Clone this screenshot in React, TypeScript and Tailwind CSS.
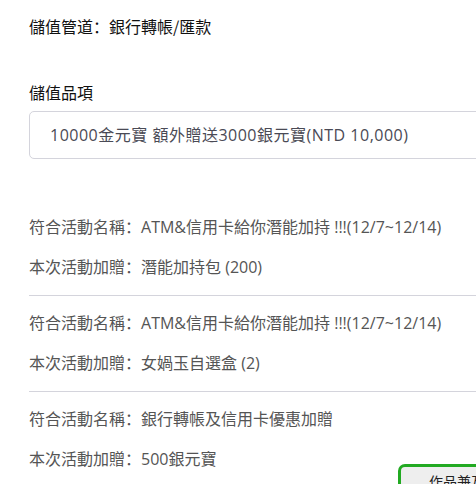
const events = [
  { name: 'ATM&信用卡給你潛能加持 !!!(12/7~12/14)', gift: '潛能加持包 (200)' },
  { name: 'ATM&信用卡給你潛能加持 !!!(12/7~12/14)', gift: '女媧玉自選盒 (2)' },
  { name: '銀行轉帳及信用卡優惠加贈', gift: '500銀元寶' },
]

export default function App() {
  return (
    <div className="relative w-[476px] h-[484px] overflow-hidden bg-white pl-[29px] pt-[14px] font-['Open_Sans','Noto_Sans_CJK_SC',sans-serif]">
      {/* 儲值管道 */}
      <div className="h-[24px] leading-[24px] text-[16px] text-[#111] font-['Noto_Sans_CJK_SC',sans-serif]">
        儲值管道：銀行轉帳/匯款
      </div>

      <div className="mt-[42px] h-[24px] leading-[24px] text-[16px] text-[#111] font-['Noto_Sans_CJK_SC',sans-serif]">
        儲值品項
      </div>

      <div className="mt-[7px] h-[48px] w-[480px] rounded-[5px] border border-[#d4d4dc] flex items-center pl-[20px] text-[16px] tracking-[0.5px] text-[#4a4a55] whitespace-nowrap">
        10000金元寶 額外贈送3000銀元寶(NTD 10,000)
      </div>

      <div className="mt-[56px]">
        {events.map((e, i) => (
          <div key={i}>
            <div className="h-[24px] leading-[24px] text-[16px] text-[#555] whitespace-nowrap">
              符合活動名稱：{e.name}
            </div>
            <div className="mt-[16px] h-[24px] leading-[24px] text-[16px] text-[#555] whitespace-nowrap">
              本次活動加贈：{e.gift}
            </div>
            {i < events.length - 1 && (
              <div className="mt-[16px] mb-[15px] h-px w-[460px] bg-[#d4d4dc]" />
            )}
          </div>
        ))}
      </div>

      {/* 浮動按鈕 (被裁切) */}
      <div className="absolute left-[398px] top-[464px] w-[120px] h-[50px] rounded-[7px] border-[3px] border-[#22aa22] bg-[#eeeeee] pl-[28px] text-[14px] leading-[28px] text-[#222] whitespace-nowrap font-['Noto_Sans_CJK_SC',sans-serif]">
        作品兼互
      </div>
    </div>
  )
}
